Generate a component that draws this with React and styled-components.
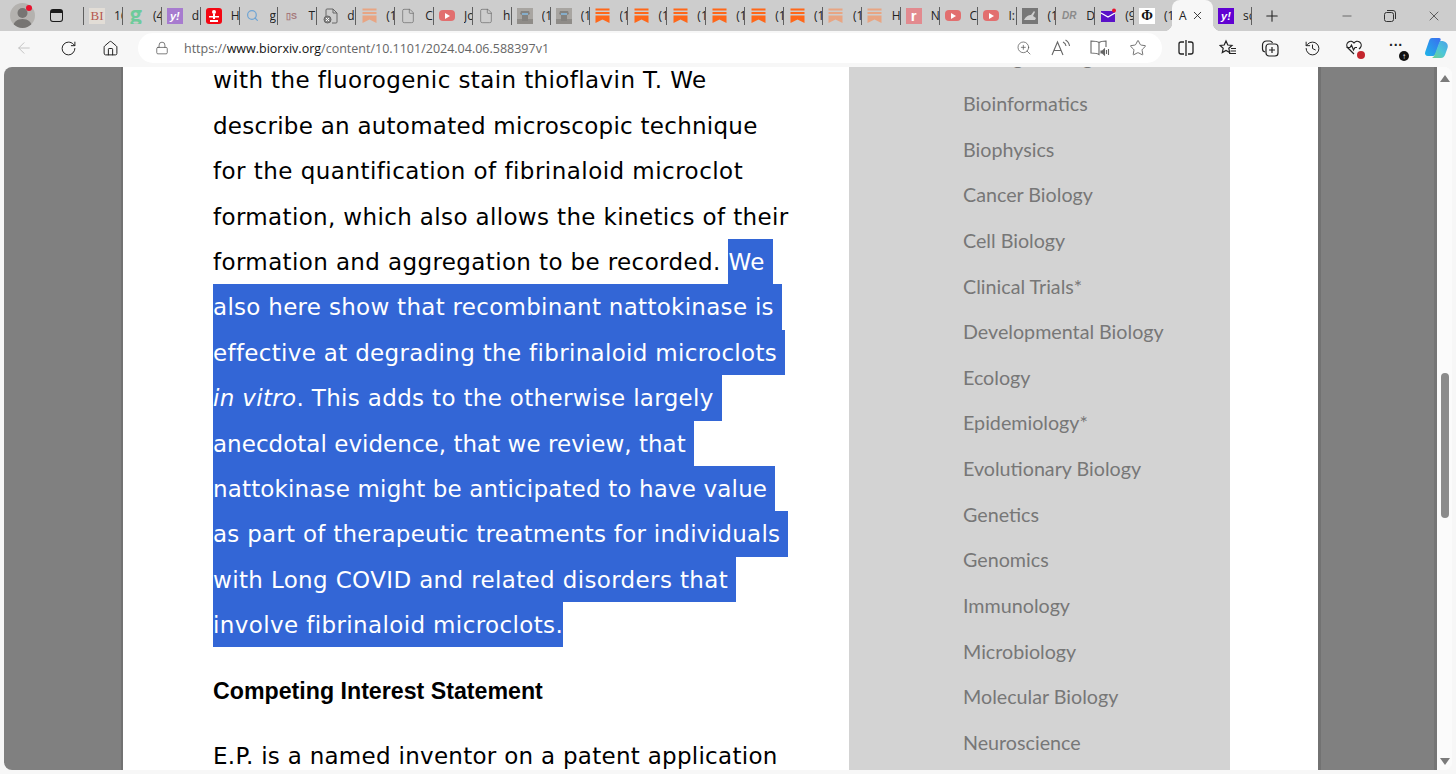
import styled, { createGlobalStyle } from 'styled-components';
import {
  ArrowLeft,
  File,
  History,
  House,
  Lock,
  Minus,
  Plus,
  RotateCw,
  Search,
  Star,
  X,
  ZoomIn,
} from 'lucide-react';

const GlobalStyle = createGlobalStyle`
  html, body {
    margin: 0;
    height: 100%;
    overflow: hidden;
    background: #f7f7f7;
  }
  #root {
    height: 100%;
  }
`;

const Window = styled.div`
  display: flex;
  flex-direction: column;
  height: 774px;
  font-family: 'Open Sans', 'Liberation Sans', sans-serif;
`;

const TabStrip = styled.div`
  display: flex;
  align-items: stretch;
  flex: none;
  height: 31px;
  background: #cdcdcd;
`;

const ProfileWrap = styled.div`
  position: relative;
  flex: none;
  width: 42px;
`;

const Profile = styled.div`
  flex: none;
  width: 25px;
  height: 25px;
  margin: 3px 0 0 10px;
  border-radius: 50%;
  background: #b4b2af;
  overflow: hidden;
  svg {
    display: block;
  }
`;

const ProfileDot = styled.span`
  position: absolute;
  left: 26px;
  top: 5px;
  width: 6px;
  height: 6px;
  border-radius: 50%;
  background: #e8112d;
`;

const VerticalTabs = styled.div`
  flex: none;
  width: 13px;
  height: 13px;
  margin: 9px 20px 0 8px;
  border: 1.5px solid #1a1a1a;
  border-top-width: 4px;
  border-radius: 3px;
  box-sizing: border-box;
`;

const Sep = styled.span`
  flex: none;
  align-self: center;
  width: 1px;
  height: 18px;
  background: #5f5f5f;
`;

const Tab = styled.div`
  display: flex;
  align-items: center;
  flex: none;
  box-sizing: border-box;
  width: 37.9px;
  padding-left: 5px;
`;

const FavSlot = styled.span`
  display: flex;
  align-items: center;
  justify-content: center;
  flex: none;
  width: 16px;
  height: 16px;
  margin-right: 9px;
`;

const TabLabel = styled.span`
  flex: 1;
  min-width: 0;
  overflow: hidden;
  white-space: nowrap;
  font-size: 12px;
  color: #222;
`;

const ActiveTab = styled.div`
  position: relative;
  display: flex;
  align-items: center;
  justify-content: space-between;
  flex: none;
  box-sizing: border-box;
  width: 41px;
  padding: 0 9px 0 7px;
  background: #f7f7f7;
  border-radius: 8px 8px 0 0;
  font-size: 12px;
  color: #222;
  &::before,
  &::after {
    content: '';
    position: absolute;
    bottom: 0;
    width: 8px;
    height: 8px;
  }
  &::before {
    left: -8px;
    background: radial-gradient(circle at 0 0, transparent 8px, #f7f7f7 8.5px);
  }
  &::after {
    right: -8px;
    background: radial-gradient(circle at 100% 0, transparent 8px, #f7f7f7 8.5px);
  }
`;

const NewTab = styled.div`
  display: flex;
  align-items: center;
  justify-content: center;
  flex: none;
  width: 40px;
  color: #222;
`;

const WindowControls = styled.div`
  display: flex;
  align-items: center;
  margin-left: auto;
  padding-right: 14px;
  gap: 30px;
  color: #333;
`;

const FavBox = styled.span`
  display: flex;
  align-items: center;
  justify-content: center;
  width: 16px;
  height: ${(p) => p.$h || 16}px;
  overflow: hidden;
  border-radius: ${(p) => p.$radius || 0}px;
  background: ${(p) => p.$bg || 'transparent'};
  color: ${(p) => p.$color || '#222'};
  font: ${(p) => p.$font || "700 11px 'Liberation Sans', sans-serif"};
`;

const GreenG = styled.span`
  margin-top: -6px;
`;

const Toolbar = styled.div`
  display: flex;
  align-items: center;
  flex: none;
  box-sizing: border-box;
  height: 36px;
  padding-bottom: 2px;
  background: #f7f7f7;
  color: #222;
`;

const NavButton = styled.div`
  position: relative;
  display: flex;
  align-items: center;
  justify-content: center;
  flex: none;
  width: ${(p) => p.$w || 42}px;
  height: 30px;
  color: ${(p) => p.$color || '#222'};
`;

const Dots = styled.span`
  margin-top: -6px;
  font: 700 14px 'Liberation Sans', sans-serif;
`;

const AddressBar = styled.div`
  display: flex;
  align-items: center;
  flex: none;
  box-sizing: border-box;
  width: 1024px;
  height: 30px;
  margin: 0 3px 0 7px;
  padding-left: 17px;
  border-radius: 15px;
  background: #fff;
  color: #555;
`;

const Url = styled.span`
  margin-left: 15px;
  font-size: 12.5px;
  color: #666;
  b {
    font-weight: 400;
    color: #111;
  }
`;

const AddressActions = styled.div`
  display: flex;
  align-items: center;
  margin-left: auto;
  padding-right: 15px;
  gap: 19px;
`;

const Badge = styled.span`
  position: absolute;
  right: ${(p) => p.$right}px;
  bottom: ${(p) => p.$bottom}px;
  display: flex;
  align-items: center;
  justify-content: center;
  width: ${(p) => p.$size}px;
  height: ${(p) => p.$size}px;
  border-radius: 50%;
  background: ${(p) => p.$bg};
  color: #fff;
  font: 700 8px 'Liberation Sans', sans-serif;
`;

const Viewport = styled.div`
  display: flex;
  flex: none;
  height: 703px;
  margin: 0 4px;
  border-radius: 8px;
  overflow: hidden;
  background: #fbfbfb;
`;

const Gutter = styled.div`
  flex: none;
  width: ${(p) => p.$w}px;
  background: #808080;
  box-shadow: inset ${(p) => (p.$side === 'left' ? '-2px' : '3px')} 0 0 #727272,
    inset ${(p) => (p.$side === 'left' ? '0' : '-3px')} 0 0 #757575;
`;

const Article = styled.main`
  flex: none;
  box-sizing: border-box;
  width: 726px;
  padding-left: 90px;
  background: #fff;
  color: #000;
  font-family: 'DejaVu Sans', sans-serif;
  font-size: 23px;
  white-space: nowrap;
`;

const Abstract = styled.div`
  margin-top: -9.6px;
`;

const Line = styled.div`
  height: 45.4px;
  line-height: 47px;
  letter-spacing: ${(p) => p.$track}px;
`;

const Selected = styled.span`
  display: inline-block;
  height: 45.4px;
  padding-right: ${(p) => p.$pad || 0}px;
  background: #3366d6;
  color: #fff;
  i {
    font-style: italic;
  }
`;

const Heading = styled.h3`
  margin: 25px 0 0;
  font-family: 'Liberation Sans', sans-serif;
  font-size: 23.2px;
  font-weight: 700;
  line-height: 38px;
`;

const Paragraph = styled.p`
  margin: 23.6px 0 0;
  line-height: 45.4px;
  letter-spacing: 0.28px;
`;

const Sidebar = styled.nav`
  flex: none;
  box-sizing: border-box;
  width: 381px;
  padding-left: 114px;
  background: #d3d3d3;
  color: #777;
  font-family: 'Lato', sans-serif;
  font-size: 19.7px;
`;

const SideList = styled.div`
  margin-top: -31.7px;
`;

const SideItem = styled.div`
  height: 45.65px;
  line-height: 45.65px;
`;

const WhiteMargin = styled.div`
  flex: none;
  width: 88px;
  background: #fff;
`;

const Scrollbar = styled.div`
  display: flex;
  flex-direction: column;
  align-items: center;
  flex: none;
  width: 15px;
  background: #fbfbfb;
`;

const ArrowTip = styled.span`
  flex: none;
  width: 0;
  height: 0;
  border-left: 5px solid transparent;
  border-right: 5px solid transparent;
  ${(p) =>
    p.$down
      ? 'border-top: 7px solid #7b7b7b; margin: auto 0 5px;'
      : 'border-bottom: 7px solid #7b7b7b; margin-top: 8px;'}
`;

const Thumb = styled.span`
  flex: none;
  width: 8px;
  height: 145px;
  margin-top: 291px;
  border-radius: 4px;
  background: #8b8b8b;
`;

function Bookmark({ color }) {
  return (
    <svg width="15" height="15" viewBox="0 0 15 15" fill={color}>
      <rect x="0.5" y="0.5" width="14" height="2" />
      <rect x="0.5" y="4" width="14" height="2" />
      <path d="M0.5 7.5h14V15l-7-3.6L0.5 15z" />
    </svg>
  );
}

function YouTube() {
  return (
    <FavBox $bg="#e26f6f" $radius={4} $h={11}>
      <svg width="8" height="8" viewBox="0 0 8 8" fill="#fff">
        <path d="M2 1l5 3-5 3z" />
      </svg>
    </FavBox>
  );
}

function DocX() {
  return (
    <svg width="15" height="16" viewBox="0 0 15 16" fill="none" stroke="#666" strokeWidth="1">
      <path d="M5 1h5l4 4v9a1 1 0 0 1-1 1H9M3 8V2a1 1 0 0 1 1-1h1M10 1v4h4" />
      <circle cx="4.5" cy="11.5" r="3.5" fill="#888" />
      <path d="M3 10l3 3M6 10l-3 3" stroke="#fff" />
    </svg>
  );
}

function Photo() {
  return (
    <svg width="16" height="16" viewBox="0 0 16 16">
      <rect width="16" height="16" fill="#a8a5a1" />
      <rect y="11" width="16" height="5" fill="#8f8c88" />
      <path d="M4 3h8l1 3-2 1v6H5V7L3 6z" fill="#84827f" />
      <rect x="5" y="5" width="6" height="2" fill="#86aecb" />
    </svg>
  );
}

function Shrine() {
  return (
    <svg width="12" height="14" viewBox="0 0 12 14" fill="#fff">
      <circle cx="6" cy="3" r="2" />
      <path d="M5 5h2v5H5zM1 7h10v1.5H1zM2 11h8v2H2z" />
    </svg>
  );
}

function Hare() {
  return (
    <svg width="16" height="16" viewBox="0 0 16 16">
      <rect width="16" height="16" fill="#777" />
      <path d="M2 12c2-4 5-5 7-5l3-4 1 1-2 4 3 2-1 2H2z" fill="#cfcfcf" />
    </svg>
  );
}

function Mail() {
  return (
    <svg width="16" height="16" viewBox="0 0 16 16" style={{ overflow: 'visible' }}>
      <rect x="1" y="3" width="14" height="11" fill="#5a12c8" />
      <path d="M1 5l7 4 7-4" fill="none" stroke="#fff" strokeWidth="1.3" />
      <circle cx="14" cy="2.5" r="2" fill="#e8112d" />
    </svg>
  );
}

const FAVICONS = {
  bi: () => (
    <FavBox $bg="#e2ddd6" $color="#b5584e" $font="400 13px 'Liberation Serif', serif">
      BI
    </FavBox>
  ),
  g: () => (
    <FavBox $color="#6ecb9b" $font="900 23px 'Lato', sans-serif">
      <GreenG>g</GreenG>
    </FavBox>
  ),
  yahooFaded: () => (
    <FavBox $bg="#a77bcf" $color="#fff" $font="italic 700 11px 'Liberation Sans', sans-serif">
      y!
    </FavBox>
  ),
  yahoo: () => (
    <FavBox $bg="#6001d2" $color="#fff" $font="italic 700 11px 'Liberation Sans', sans-serif">
      y!
    </FavBox>
  ),
  shrine: () => (
    <FavBox $bg="#f40612" $radius={3}>
      <Shrine />
    </FavBox>
  ),
  search: () => <Search size={13} color="#6ea4d4" strokeWidth={2.2} />,
  ds: () => (
    <FavBox $color="#a5777a" $font="700 9px 'Liberation Sans', sans-serif">
      ▯S
    </FavBox>
  ),
  docx: () => <DocX />,
  doc: () => <File size={16} color="#666" strokeWidth={1} />,
  sub: () => <Bookmark color="#ff6719" />,
  subFaded: () => <Bookmark color="#e8a583" />,
  yt: () => <YouTube />,
  photo: () => <Photo />,
  r: () => (
    <FavBox $bg="#e28a8f" $color="#fff" $font="700 15px 'Liberation Sans', sans-serif">
      r
    </FavBox>
  ),
  hare: () => <Hare />,
  dr: () => (
    <FavBox $color="#8a8a8a" $font="italic 900 10px 'Liberation Sans', sans-serif">
      DR
    </FavBox>
  ),
  mail: () => <Mail />,
  phi: () => (
    <FavBox $bg="#fff" $color="#111" $font="700 14px 'Liberation Serif', serif">
      Φ
    </FavBox>
  ),
};

const leftTabs = [
  ['bi', '16'],
  ['g', '(4'],
  ['yahooFaded', 'd'],
  ['shrine', 'H'],
  ['search', 'g'],
  ['ds', 'T'],
  ['docx', 'd'],
  ['subFaded', '(1'],
  ['doc', 'C'],
  ['yt', 'Jo'],
  ['doc', 'h'],
  ['photo', '(1'],
  ['photo', '(1'],
  ['sub', '(1'],
  ['sub', '(1'],
  ['sub', '(1'],
  ['sub', '(1'],
  ['sub', '(1'],
  ['sub', '(1'],
  ['subFaded', '(1'],
  ['subFaded', 'H'],
  ['r', 'N'],
  ['yt', 'C'],
  ['yt', 'I:'],
  ['hare', '(1'],
  ['dr', 'D'],
  ['mail', '(9'],
  ['phi', '(1'],
];

const subjects = [
  'Bioengineering',
  'Bioinformatics',
  'Biophysics',
  'Cancer Biology',
  'Cell Biology',
  'Clinical Trials*',
  'Developmental Biology',
  'Ecology',
  'Epidemiology*',
  'Evolutionary Biology',
  'Genetics',
  'Genomics',
  'Immunology',
  'Microbiology',
  'Molecular Biology',
  'Neuroscience',
];

function BrowserTab({ icon, label, last }) {
  const Icon = FAVICONS[icon];
  return (
    <>
      <Tab>
        <FavSlot>
          <Icon />
        </FavSlot>
        <TabLabel>{label}</TabLabel>
      </Tab>
      {!last && <Sep />}
    </>
  );
}

function Restore() {
  return (
    <svg width="12" height="12" viewBox="0 0 12 12" fill="none" stroke="#333" strokeWidth="1">
      <rect x="0.5" y="2.5" width="9" height="9" rx="2" />
      <path d="M3 .5h6a2.5 2.5 0 0 1 2.5 2.5v6" />
    </svg>
  );
}

function ReadAloud() {
  return (
    <svg width="20" height="18" viewBox="0 0 20 18" fill="none" stroke="#666" strokeWidth="1.1">
      <path d="M1 16L6.5 3 12 16M3 11.5h7" />
      <path d="M12 3a5 5 0 0 1 3 4M14.5 1a8 8 0 0 1 4 6" />
    </svg>
  );
}

function Immersive() {
  return (
    <svg width="20" height="18" viewBox="0 0 20 18" fill="none" stroke="#666" strokeWidth="1.1">
      <path d="M9 3.5C7 2 4 2 1 2v12c3 0 6 0 8 1.5V3.5zM9 3.5C11 2 14 2 16 2v6" />
      <path d="M11 12h1.5l2-2v6l-2-2H11zM16.5 11v4M18.5 10v6" fill="#666" />
    </svg>
  );
}

function SplitScreen() {
  return (
    <svg width="16" height="18" viewBox="0 0 16 18" fill="none" stroke="#222" strokeWidth="1.3">
      <path d="M6 3H3a2 2 0 0 0-2 2v8a2 2 0 0 0 2 2h3M10 3h3a2 2 0 0 1 2 2v8a2 2 0 0 1-2 2h-3M8 1v16" />
    </svg>
  );
}

function Favorites() {
  return (
    <svg width="18" height="18" viewBox="0 0 18 18" fill="none" stroke="#222" strokeWidth="1.2">
      <path d="M7 2l1.8 4 4.2.4-3.2 2.9.9 4.2L7 11.4l-3.7 2.1.9-4.2L1 6.4 5.2 6z" />
      <path d="M12 9.5h5M11.500 12h5.500M10 14.500h7" />
    </svg>
  );
}

function Collections() {
  return (
    <svg width="18" height="18" viewBox="0 0 18 18" fill="none" stroke="#222" strokeWidth="1.2">
      <path d="M4 13a3 3 0 0 1-2.500-3V6a4 4 0 0 1 4-4h3a3 3 0 0 1 3 2" />
      <rect x="5" y="5" width="12" height="12" rx="3" />
      <path d="M11 8v6M8 11h6" />
    </svg>
  );
}

function HeartBeat() {
  return (
    <svg width="18" height="18" viewBox="0 0 18 18" fill="none" stroke="#222" strokeWidth="1.2">
      <path d="M9 15L2.500 8.500A3.800 3.800 0 0 1 9 4a3.800 3.800 0 0 1 6.500 4.500L14 10" />
      <path d="M1.500 8.500h3.500l1.500-2.500 2 5 1.500-2.500h2" />
    </svg>
  );
}

function Copilot() {
  return (
    <svg width="24" height="24" viewBox="0 0 24 24">
      <defs>
        <linearGradient id="copA" x1="0" y1="1" x2="1" y2="0">
          <stop offset="0" stopColor="#1fb6e8" />
          <stop offset="1" stopColor="#3a6df0" />
        </linearGradient>
        <linearGradient id="copB" x1="0" y1="1" x2="1" y2="0">
          <stop offset="0" stopColor="#6fd08a" />
          <stop offset="0.5" stopColor="#4cc6d8" />
          <stop offset="1" stopColor="#4aa0e8" />
        </linearGradient>
      </defs>
      <path d="M8 2h7c1.500 0 2 1 1.500 2.200L12 17c-1 2.500-2 3-4 3H4c-2.500 0-3.500-2-2.800-4L5 5c.6-2 1.500-3 3-3z" fill="url(#copA)" />
      <path d="M17 5c-1 0-1.500.5-2 2l-4 11c-.8 2-1.500 3-3 4h9c2 0 3-1 4-3l2.500-7c1-3-.5-7-6.500-7z" fill="url(#copB)" />
    </svg>
  );
}

export default function App() {
  return (
    <Window>
      <GlobalStyle />
      <TabStrip>
        <ProfileWrap>
          <Profile>
            <svg width="25" height="25" viewBox="0 0 25 25" fill="#777573">
              <circle cx="12.5" cy="10" r="5" />
              <path d="M3 25c0-6 4-9 9.500-9S22 19 22 25z" />
            </svg>
          </Profile>
          <ProfileDot />
        </ProfileWrap>
        <VerticalTabs />
        <Sep />
        {leftTabs.map(([icon, label], i) => (
          <BrowserTab key={i} icon={icon} label={label} last={i === leftTabs.length - 1} />
        ))}
        <ActiveTab>
          A
          <X size={13} strokeWidth={1.6} />
        </ActiveTab>
        <BrowserTab icon="yahoo" label="sc" />
        <NewTab>
          <Plus size={18} strokeWidth={1.4} />
        </NewTab>
        <WindowControls>
          <Minus size={14} strokeWidth={1.1} />
          <Restore />
          <X size={16} strokeWidth={1.1} />
        </WindowControls>
      </TabStrip>

      <Toolbar>
        <NavButton $w={47} $color="#bdbdbd">
          <ArrowLeft size={18} strokeWidth={1.2} />
        </NavButton>
        <NavButton>
          <RotateCw size={17} strokeWidth={1.4} />
        </NavButton>
        <NavButton>
          <House size={17} strokeWidth={1.4} />
        </NavButton>
        <AddressBar>
          <Lock size={14} strokeWidth={1.3} />
          <Url>
            https://<b>www.biorxiv.org</b>/content/10.1101/2024.04.06.588397v1
          </Url>
          <AddressActions>
            <ZoomIn size={16} strokeWidth={1.1} />
            <ReadAloud />
            <Immersive />
            <Star size={18} strokeWidth={1.1} />
          </AddressActions>
        </AddressBar>
        <NavButton>
          <SplitScreen />
        </NavButton>
        <NavButton>
          <Favorites />
        </NavButton>
        <NavButton>
          <Collections />
        </NavButton>
        <NavButton>
          <History size={17} strokeWidth={1.4} />
        </NavButton>
        <NavButton>
          <HeartBeat />
          <Badge $right={10} $bottom={4} $size={8} $bg="#c4262e" />
        </NavButton>
        <NavButton>
          <Dots>···</Dots>
          <Badge $right={8} $bottom={2} $size={10} $bg="#111">
            ↑
          </Badge>
        </NavButton>
        <NavButton $w={38}>
          <Copilot />
        </NavButton>
      </Toolbar>

      <Viewport>
        <Gutter $w={119} $side="left" />
        <Article>
          <Abstract>
            <Line $track={0.4}>with the fluorogenic stain thioflavin T. We</Line>
            <Line $track={0.26}>describe an automated microscopic technique</Line>
            <Line $track={0.465}>for the quantification of fibrinaloid microclot</Line>
            <Line $track={0.36}>formation, which also allows the kinetics of their</Line>
            <Line $track={0.38}>
              formation and aggregation to be recorded. <Selected $pad={8}>We</Selected>
            </Line>
            <Line $track={0.29}>
              <Selected $pad={8}>also here show that recombinant nattokinase is</Selected>
            </Line>
            <Line $track={0.32}>
              <Selected $pad={8}>effective at degrading the fibrinaloid microclots</Selected>
            </Line>
            <Line $track={0.335}>
              <Selected $pad={8}>
                <i>in vitro</i>. This adds to the otherwise largely
              </Selected>
            </Line>
            <Line $track={0.03}>
              <Selected $pad={8}>anecdotal evidence, that we review, that</Selected>
            </Line>
            <Line $track={0.16}>
              <Selected $pad={8}>nattokinase might be anticipated to have value</Selected>
            </Line>
            <Line $track={0.26}>
              <Selected $pad={8}>as part of therapeutic treatments for individuals</Selected>
            </Line>
            <Line $track={0.36}>
              <Selected $pad={8}>with Long COVID and related disorders that</Selected>
            </Line>
            <Line $track={0.38}>
              <Selected>involve fibrinaloid microclots.</Selected>
            </Line>
          </Abstract>
          <Heading>Competing Interest Statement</Heading>
          <Paragraph>E.P. is a named inventor on a patent application</Paragraph>
        </Article>
        <Sidebar>
          <SideList>
            {subjects.map((s) => (
              <SideItem key={s}>{s}</SideItem>
            ))}
          </SideList>
        </Sidebar>
        <WhiteMargin />
        <Gutter $w={119} $side="right" />
        <Scrollbar>
          <ArrowTip />
          <Thumb />
          <ArrowTip $down />
        </Scrollbar>
      </Viewport>
    </Window>
  );
}
